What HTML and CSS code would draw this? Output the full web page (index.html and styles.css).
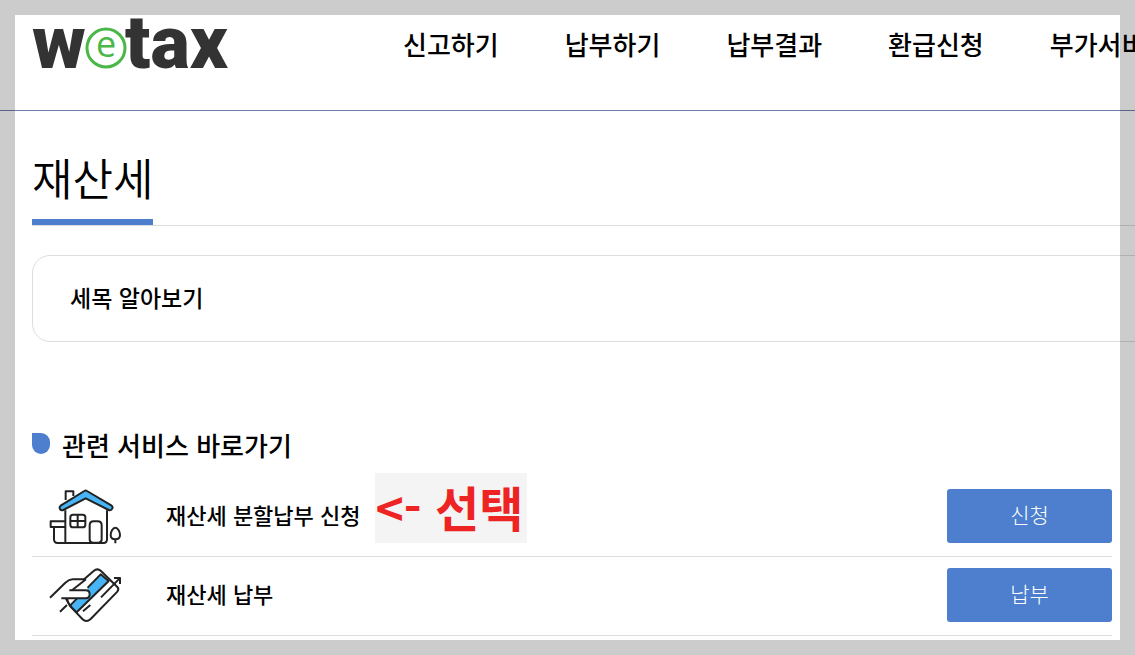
FILE: index.html
```html
<!DOCTYPE html>
<html lang="ko">
<head>
<meta charset="utf-8">
<title>재산세 - wetax</title>
<link rel="stylesheet" href="styles.css">
</head>
<body>
<header class="header">
  <a class="logo" href="#" aria-label="wetax">
    <svg class="logo-image" width="200" height="60" viewBox="0 0 200 60">
      <text class="logo-text" x="0" y="54">w</text>
      <circle class="logo-ring" cx="74" cy="34" r="19"/>
      <text class="logo-e" x="64" y="43">e</text>
      <text class="logo-text" x="93" y="54">tax</text>
    </svg>
  </a>
  <nav class="nav">
    <a href="#">신고하기</a>
    <a href="#">납부하기</a>
    <a href="#">납부결과</a>
    <a href="#">환급신청</a>
    <a href="#">부가서비스</a>
  </nav>
</header>
<main class="content">
  <div class="title-bar"><h1 class="title">재산세</h1></div>
  <section class="info">세목 알아보기</section>
  <h2 class="section-title">관련 서비스 바로가기</h2>
  <ul class="services">
    <li class="service">
      <svg class="service-icon" width="76" height="60" viewBox="54 33 228 180" aria-hidden="true">
        <path d="M107 75V49h23v14M106 106v97M231 106v87q0 11-10 11H83q-11 0-11-11v-36M106 139H62v17h44"/>
        <path class="fill" d="M163 48q4-3 8 0l74 44q5 5 1 10-4 6-10 3l-69-35-67 35q-7 3-10-3-3-6 2-10z"/>
        <rect x="121" y="119" width="45" height="38" rx="8"/>
        <path d="M143 119v38M121 138h45"/>
        <path d="M179 193v-42q0-12 12-12h12q12 0 12 12v42q0 10-10 10h-16q-10 0-10-10z"/>
        <path d="M256 205v-13M256 158c-8 0-14 13-14 22 0 8 5 13 14 13s14-5 14-13c0-9-6-22-14-22z"/>
      </svg>
      <span class="service-name">재산세 분할납부 신청<strong class="note">&lt;- 선택</strong></span>
      <button class="button" type="button">신청</button>
    </li>
    <li class="service">
      <svg class="service-icon" width="76" height="60" viewBox="54 30 228 180" aria-hidden="true">
        <path class="paper" d="M122 107l69-59q11-10 22 0l49 48q6 6 0 14l-80 82q-13 12-25 0l-36-38-13-23z"/>
        <path class="fill" d="M120 152l92-94 24 20-96 94z"/>
        <path class="mask" d="M119 107l13-33h33l10 33z"/>
        <path class="paper" d="M94 130h73q12 0 12-12t-12-12h-49"/>
        <path d="M60 128l46-45q11-10 22-10h38M168 73l-42 33M112 131q0 13 12 24M90 170l21-20"/>
        <path d="M213 127l56-57M252 69h18v18M159 169l22-19"/>
      </svg>
      <span class="service-name">재산세 납부</span>
      <button class="button" type="button">납부</button>
    </li>
  </ul>
</main>
<div class="frame"></div>
</body>
</html>
```
FILE: styles.css
```css
* { box-sizing: border-box; }
body {
  margin: 0;
  min-height: 100vh;
  overflow: hidden;
  background: #fff;
  color: #000;
  font-family: "Noto Sans CJK KR", sans-serif;
}
a { color: inherit; text-decoration: none; }

/* Translucent border over the page edges */
.frame {
  position: fixed;
  inset: 0;
  border: 15px solid rgba(0, 0, 0, 0.2);
  pointer-events: none;
}

.header {
  display: flex;
  align-items: flex-start;
  height: 111px;
  padding: 14px 0 0 32px;
  border-bottom: 1px solid #6e7fa9;
}
.logo { flex: none; width: 371px; }
.logo-image { display: block; overflow: visible; }
.logo-text {
  font: 900 74px Roboto, sans-serif;
  fill: #333;
}
.logo-e {
  font: 400 36px "Open Sans", sans-serif;
  fill: #4ab748;
}
.logo-ring { fill: #fff; stroke: #4ab748; stroke-width: 3; }
.nav {
  display: flex;
  gap: 66px;
  padding-top: 11px;
  font-size: 26px;
  font-weight: 500;
  line-height: 38px;
  white-space: nowrap;
}

.content { padding: 36px 23px 0 32px; }
.title-bar {
  display: flex;
  margin-right: -23px;
  border-bottom: 1px solid #ddd;
}
.title {
  margin: 0;
  padding-bottom: 12px;
  border-bottom: 6px solid #4d7fce;
  font-size: 44px;
  font-weight: 350;
  line-height: 60px;
}
.info {
  margin: 29px -48px 0 0;
  padding: 24px 37px 26px;
  border: 1px solid #ddd;
  border-radius: 18px;
  font-size: 23px;
  font-weight: 500;
  line-height: 35px;
}
.section-title {
  display: flex;
  gap: 12px;
  margin: 85px 0 0;
  font-size: 26px;
  font-weight: 500;
  line-height: 36px;
}
.section-title::before {
  content: "";
  width: 18px;
  height: 21px;
  margin-top: 6px;
  border-radius: 0 9px 9px 9px;
  background: #4d7fce;
}

.services { margin: 15px 0 0; padding: 0; list-style: none; }
.service {
  display: flex;
  align-items: center;
  height: 79px;
  padding: 11px 0 13px 16px;
  border-bottom: 1px solid #ddd;
}
.service-icon {
  flex: none;
  margin-right: 42px;
  fill: none;
  stroke: #222;
  stroke-width: 6;
  stroke-linejoin: round;
}
.service-icon .fill { fill: #47b5f5; }
.service-icon .paper { fill: #fff; }
.service-icon .mask { fill: #fff; stroke: none; }
.service-name {
  position: relative;
  padding-bottom: 4px;
  font-size: 22px;
  font-weight: 500;
  line-height: 32px;
  white-space: nowrap;
}
.note {
  position: absolute;
  top: -25px;
  left: 100%;
  margin-left: 15px;
  padding: 0 4px 4px 0;
  background: #f4f4f4;
  color: #ee2424;
  font-size: 48px;
  font-weight: 700;
  line-height: 66px;
}
.button {
  width: 165px;
  height: 54px;
  margin-left: auto;
  padding: 0 0 4px;
  border: 0;
  border-radius: 3px;
  background: #4d7fce;
  color: #fff;
  font-family: inherit;
  font-size: 21px;
  font-weight: 300;
}
```
